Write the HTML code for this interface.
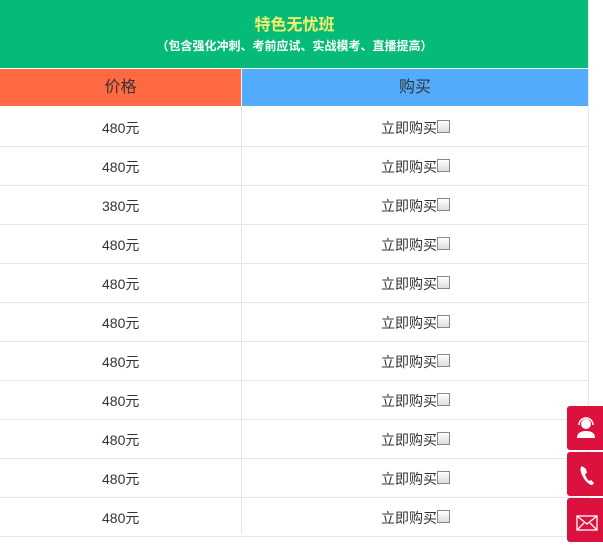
<!DOCTYPE html><html><head><meta charset="utf-8"><style>
body{margin:0;width:603px;height:534px;overflow:hidden;background:#fff;font-family:"Liberation Sans","Noto Sans CJK SC",sans-serif;position:relative}
.hd{position:absolute;left:0;top:0;width:589px;height:68px;background:#06bb78;text-align:center}
.t1{position:absolute;top:11px;width:100%;color:#f5f06a;font-size:16px;font-weight:bold}
.t2{position:absolute;top:37px;width:100%;color:#fff;font-size:12px;font-weight:bold}
.th{position:absolute;top:69px;height:37px;line-height:37px;text-align:center;font-size:16px;color:#333}
.row{position:absolute;left:0;width:589px;height:38px;border-bottom:1px solid #e6e6e6;font-size:14px;color:#333}
.row span{position:absolute;top:1px;line-height:38px}
.vl{position:absolute;left:241px;top:106px;width:1px;height:428px;background:#e6e6e6}
.rl{position:absolute;left:588px;top:0;width:1px;height:534px;background:#e6e6e6}
.cb{display:inline-block;width:11px;height:11px;border:1px solid #888;background:linear-gradient(#fff,#ddd);vertical-align:top;margin-top:11px}
.btn{position:absolute;left:567px;width:36px;height:44px;background:#dc113d;border-radius:3px 0 0 3px}
</style></head><body>
<div class="hd"><div class="t1">特色无忧班</div><div class="t2">（包含强化冲刺、考前应试、实战模考、直播提高）</div></div>
<div class="th" style="left:0;width:241px;background:#ff6a42">价格</div>
<div class="th" style="left:242px;width:346px;background:#52abfb">购买</div>
<div id="rows"></div>
<div class="vl"></div><div class="rl"></div>
<script>
var p=["480","480","380","480","480","480","480","480","480","480","480"],h="";
for(var i=0;i<11;i++){h+='<div class="row" style="top:'+(108+i*39)+'px"><span style="left:102px">'+p[i]+'元</span><span style="left:381px">立即购买<i class="cb"></i></span></div>';}
document.getElementById("rows").innerHTML=h;
</script>
<div class="btn" style="top:406px"><svg width="36" height="44"><circle cx="19" cy="18" r="5" fill="#fff"/><path d="M12 19a7 7 0 0 1 14 0" stroke="#fff" stroke-width="1.5" fill="none"/><path d="M10 32q0-7 9-7t9 7z" fill="#fff"/></svg></div>
<div class="btn" style="top:452px"><svg width="36" height="44"><path d="M15 14q-3 2 0 9t9 10q2 0 3-2l-3-3-2 1q-3-3-4-7l2-1-1-4z" fill="#fff"/></svg></div>
<div class="btn" style="top:498px"><svg width="36" height="44"><rect x="10" y="18" width="20" height="14" fill="none" stroke="#fff" stroke-width="1.3"/><path d="M10 18l10 8 10-8M10 32l7-7M30 32l-7-7" stroke="#fff" stroke-width="1.3" fill="none"/></svg></div>
</body></html>
